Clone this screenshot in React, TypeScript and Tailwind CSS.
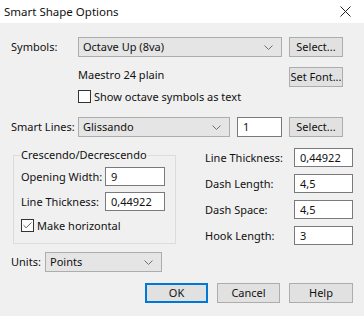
import { Check } from "lucide-react";

function Combo({ value, w }: { value: string; w: string }) {
  return (
    <div className={`${w} h-[20px] shrink-0 flex items-center justify-between bg-[#e5e5e5] border border-[#adadad] pl-[4px] pr-[8px]`}>
      <span>{value}</span>
      <svg width="9" height="5" viewBox="0 0 9 5" className="text-[#707070]">
        <path d="M0.5 0.5 L4.5 4.5 L8.5 0.5" fill="none" stroke="currentColor" strokeWidth="1" />
      </svg>
    </div>
  );
}

function Btn({ label, w = "w-[54px]", primary = false }: { label: string; w?: string; primary?: boolean }) {
  return (
    <div
      className={`${w} h-[20px] shrink-0 flex items-center justify-center bg-[#e1e1e1] ${
        primary ? "border-2 border-[#0078d7]" : "border border-[#adadad]"
      }`}
    >
      {label}
    </div>
  );
}

function Field({ value, w = "w-[59px]", h = "h-[19px]" }: { value: string; w?: string; h?: string }) {
  return (
    <div className={`${w} ${h} shrink-0 flex items-center bg-white border border-[#7a7a7a] pl-[5px]`}>{value}</div>
  );
}

function CheckBox({ checked, label }: { checked?: boolean; label: string }) {
  return (
    <div className="flex items-center h-[13px] gap-[3px]">
      <div className="w-[13px] h-[13px] shrink-0 bg-white border border-[#333333] flex items-center justify-center">
        {checked && <Check size={11} strokeWidth={1.6} className="text-[#222222]" />}
      </div>
      <span>{label}</span>
    </div>
  );
}

export default function App() {
  return (
    <div
      className="w-[364px] h-[316px] bg-[#f0f0f0] text-[11px] leading-[16px] text-[#111111] overflow-hidden whitespace-nowrap"
      style={{ fontFamily: '"Noto Sans", "Open Sans", sans-serif' }}
    >
      {/* Title bar */}
      <div className="h-[23px] bg-white flex items-center justify-between pl-[4px] pr-[13px] text-[11.5px]">
        <span>Smart Shape Options</span>
        <svg width="11" height="11" viewBox="0 0 11 11" className="text-[#222222]">
          <path d="M0.5 0.5 L10.5 10.5 M10.5 0.5 L0.5 10.5" stroke="currentColor" strokeWidth="1" />
        </svg>
      </div>

      <div className="pl-[11px]">
        {/* Symbols */}
        <div className="mt-[14px] flex items-center h-[20px]">
          <span className="w-[67px] shrink-0">Symbols:</span>
          <Combo value="Octave Up (8va)" w="w-[204px]" />
          <div className="ml-[7px]">
            <Btn label="Select..." />
          </div>
        </div>

        {/* Font */}
        <div className="mt-[10px] flex items-start h-[20px]">
          <span className="w-[278px] shrink-0 pl-[67px]">Maestro 24 plain</span>
          <Btn label="Set Font..." />
        </div>

        <div className="mt-[3px] pl-[67px]">
          <CheckBox label="Show octave symbols as text" />
        </div>

        {/* Smart Lines */}
        <div className="mt-[14px] flex items-center h-[20px]">
          <span className="w-[67px] shrink-0">Smart Lines:</span>
          <Combo value="Glissando" w="w-[152px]" />
          <div className="ml-[7px]">
            <Field value="1" w="w-[45px]" h="h-[20px]" />
          </div>
          <div className="ml-[7px]">
            <Btn label="Select..." />
          </div>
        </div>

        {/* Two columns */}
        <div className="mt-[11px] flex items-start">
          <div className="relative shrink-0 ml-[2px] mt-[7px] w-[163px] h-[89px] border border-[#dcdcdc] pl-[7px] pt-[11px]">
            <span className="absolute -top-[9px] left-[6px] bg-[#f0f0f0] px-[1px]">Crescendo/Decrescendo</span>
            <div className="flex items-center">
              <span className="w-[84px] shrink-0">Opening Width:</span>
              <Field value="9" w="w-[60px]" />
            </div>
            <div className="mt-[6px] flex items-center">
              <span className="w-[84px] shrink-0">Line Thickness:</span>
              <Field value="0,44922" w="w-[60px]" />
            </div>
            <div className="mt-[8px]">
              <CheckBox checked label="Make horizontal" />
            </div>
          </div>

          <div className="ml-[29px] flex flex-col gap-[7px]">
            <div className="flex items-center">
              <span className="w-[89px] shrink-0">Line Thickness:</span>
              <Field value="0,44922" />
            </div>
            <div className="flex items-center">
              <span className="w-[89px] shrink-0">Dash Length:</span>
              <Field value="4,5" />
            </div>
            <div className="flex items-center">
              <span className="w-[89px] shrink-0">Dash Space:</span>
              <Field value="4,5" />
            </div>
            <div className="flex items-center">
              <span className="w-[89px] shrink-0">Hook Length:</span>
              <Field value="3" />
            </div>
          </div>
        </div>

        {/* Units */}
        <div className="mt-[7px] flex items-center h-[20px]">
          <span className="w-[34px] shrink-0">Units:</span>
          <Combo value="Points" w="w-[117px]" />
        </div>

        {/* Buttons */}
        <div className="mt-[11px] flex justify-end gap-[9px] pr-[11px]">
          <Btn label="OK" w="w-[63px]" primary />
          <Btn label="Cancel" w="w-[63px]" />
          <Btn label="Help" w="w-[64px]" />
        </div>
      </div>
    </div>
  );
}
